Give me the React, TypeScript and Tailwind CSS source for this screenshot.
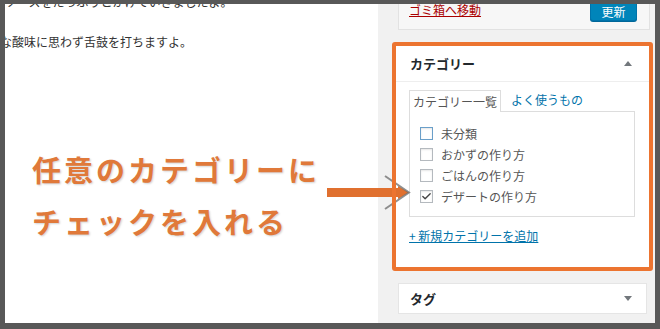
import { Check } from 'lucide-react';

const jp = { fontFamily: '"Noto Sans CJK JP", "Noto Sans", sans-serif' };

const categories = [
    { name: '未分類', checked: false, focus: true },
    { name: 'おかずの作り方', checked: false, focus: false },
    { name: 'ごはんの作り方', checked: false, focus: false },
    { name: 'デザートの作り方', checked: true, focus: false },
];

function Arrow({ up }: { up?: boolean }) {
    return (
        <svg width="8" height="5" viewBox="0 0 8 5">
            <polygon points={up ? '0,5 4,0 8,5' : '0,0 8,0 4,5'} fill="#72777c" />
        </svg>
    );
}

export default function App() {
    return (
        <div
            className="relative w-[660px] h-[329px] overflow-hidden bg-[#585858] pt-[4px] pl-[5px] pr-[5px] pb-[6px]"
            style={jp}
        >
            <div className="flex h-full overflow-hidden">
                {/* editor */}
                <div className="w-[373px] shrink-0 overflow-hidden bg-white text-[#333]">
                    <p className="-mt-[12px] h-[20px] whitespace-nowrap pl-[0px] text-[12px] leading-[20px]">
                        ソースをたっぷりとかけていきましたよ。
                    </p>
                    <p className="-ml-[5px] mt-[20px] h-[20px] whitespace-nowrap text-[12px] leading-[20px]">
                        な酸味に思わず舌鼓を打ちますよ。
                    </p>
                    <div className="mt-[91px] pl-[27px] text-[29px] font-bold leading-[52px] tracking-[3px] text-[#e0793a] [text-shadow:1px_1px_2px_rgba(0,0,0,0.18)]">
                        <div>任意のカテゴリーに</div>
                        <div>チェックを入れる</div>
                    </div>
                </div>

                {/* sidebar */}
                <div className="flex-1 bg-[#f1f1f1]">
                    <div className="ml-[20px] mr-[5px] flex h-[26px] items-start justify-between border-x border-b border-[#e2e2e2] bg-[#f7f7f7] pl-[10px] pr-[12px]">
                        <span className="-mt-[1px] text-[12px] leading-[14px] text-[#a00] underline">ゴミ箱へ移動</span>
                        <span className="-mt-[4px] flex h-[21px] w-[47px] items-center justify-center rounded-[3px] border border-[#0073aa] bg-[#0085ba] pt-[3px] text-[12px] text-white shadow-[0_1px_0_#006799]">
                            更新
                        </span>
                    </div>

                    {/* category box */}
                    <div className="ml-[14px] mt-[12px] h-[229px] w-[261px] rounded-[3px] border-4 border-[#ec7430] bg-white">
                        <div className="flex h-[36px] items-center justify-between border-b border-[#eee] pl-[14px] pr-[17px]">
                            <span className="text-[13px] font-bold text-[#23282d]">カテゴリー</span>
                            <Arrow up />
                        </div>
                        <div className="pl-[13px] pt-[7px]">
                            <div className="flex items-end">
                                <span className="relative top-[1px] h-[22px] border-x border-t border-[#ddd] bg-white px-[3px] text-[12px] leading-[21px] text-[#555]">
                                    カテゴリー一覧
                                </span>
                                <span className="ml-[10px] h-[22px] text-[12px] leading-[21px] text-[#0073aa]">よく使うもの</span>
                            </div>
                            <div className="flex h-[106px] w-[226px] flex-col gap-[8px] border border-[#ddd] bg-white pl-[10px] pt-[15px]">
                                {categories.map((c) => (
                                    <label key={c.name} className="flex h-[13px] items-center gap-[8px] text-[12px] text-[#555]">
                                        <span
                                            className={`flex h-[13px] w-[13px] items-center justify-center border bg-white shadow-[inset_0_1px_2px_rgba(0,0,0,0.1)] ${
                                                c.focus ? 'border-[#6a9fc9]' : 'border-[#b4b9be]'
                                            }`}
                                        >
                                            {c.checked && <Check size={11} strokeWidth={3} color="#444" />}
                                        </span>
                                        <span className="leading-[13px]">{c.name}</span>
                                    </label>
                                ))}
                            </div>
                            <div className="mt-[11px] text-[12px] leading-[16px] text-[#0073aa] underline">+ 新規カテゴリーを追加</div>
                        </div>
                    </div>

                    {/* tag box */}
                    <div className="ml-[20px] mt-[12px] flex h-[31px] w-[249px] items-center justify-between border border-[#e5e5e5] bg-white pl-[11px] pr-[14px]">
                        <span className="text-[13px] font-bold text-[#23282d]">タグ</span>
                        <Arrow />
                    </div>
                </div>
            </div>

            {/* annotation arrow */}
            <svg className="absolute left-[320px] top-[170px]" width="95" height="45" viewBox="320 170 95 45">
                <rect x="327" y="188" width="73" height="9" fill="#e0702f" />
                <polygon points="398,186 409,192.5 398,199" fill="#e0702f" />
                <polyline points="385,176 409,192.5 385,209" fill="none" stroke="#6b6b6b" strokeWidth="2" strokeOpacity="0.75" />
                <rect x="392" y="170" width="4" height="45" fill="#ec7430" />
            </svg>
        </div>
    );
}
